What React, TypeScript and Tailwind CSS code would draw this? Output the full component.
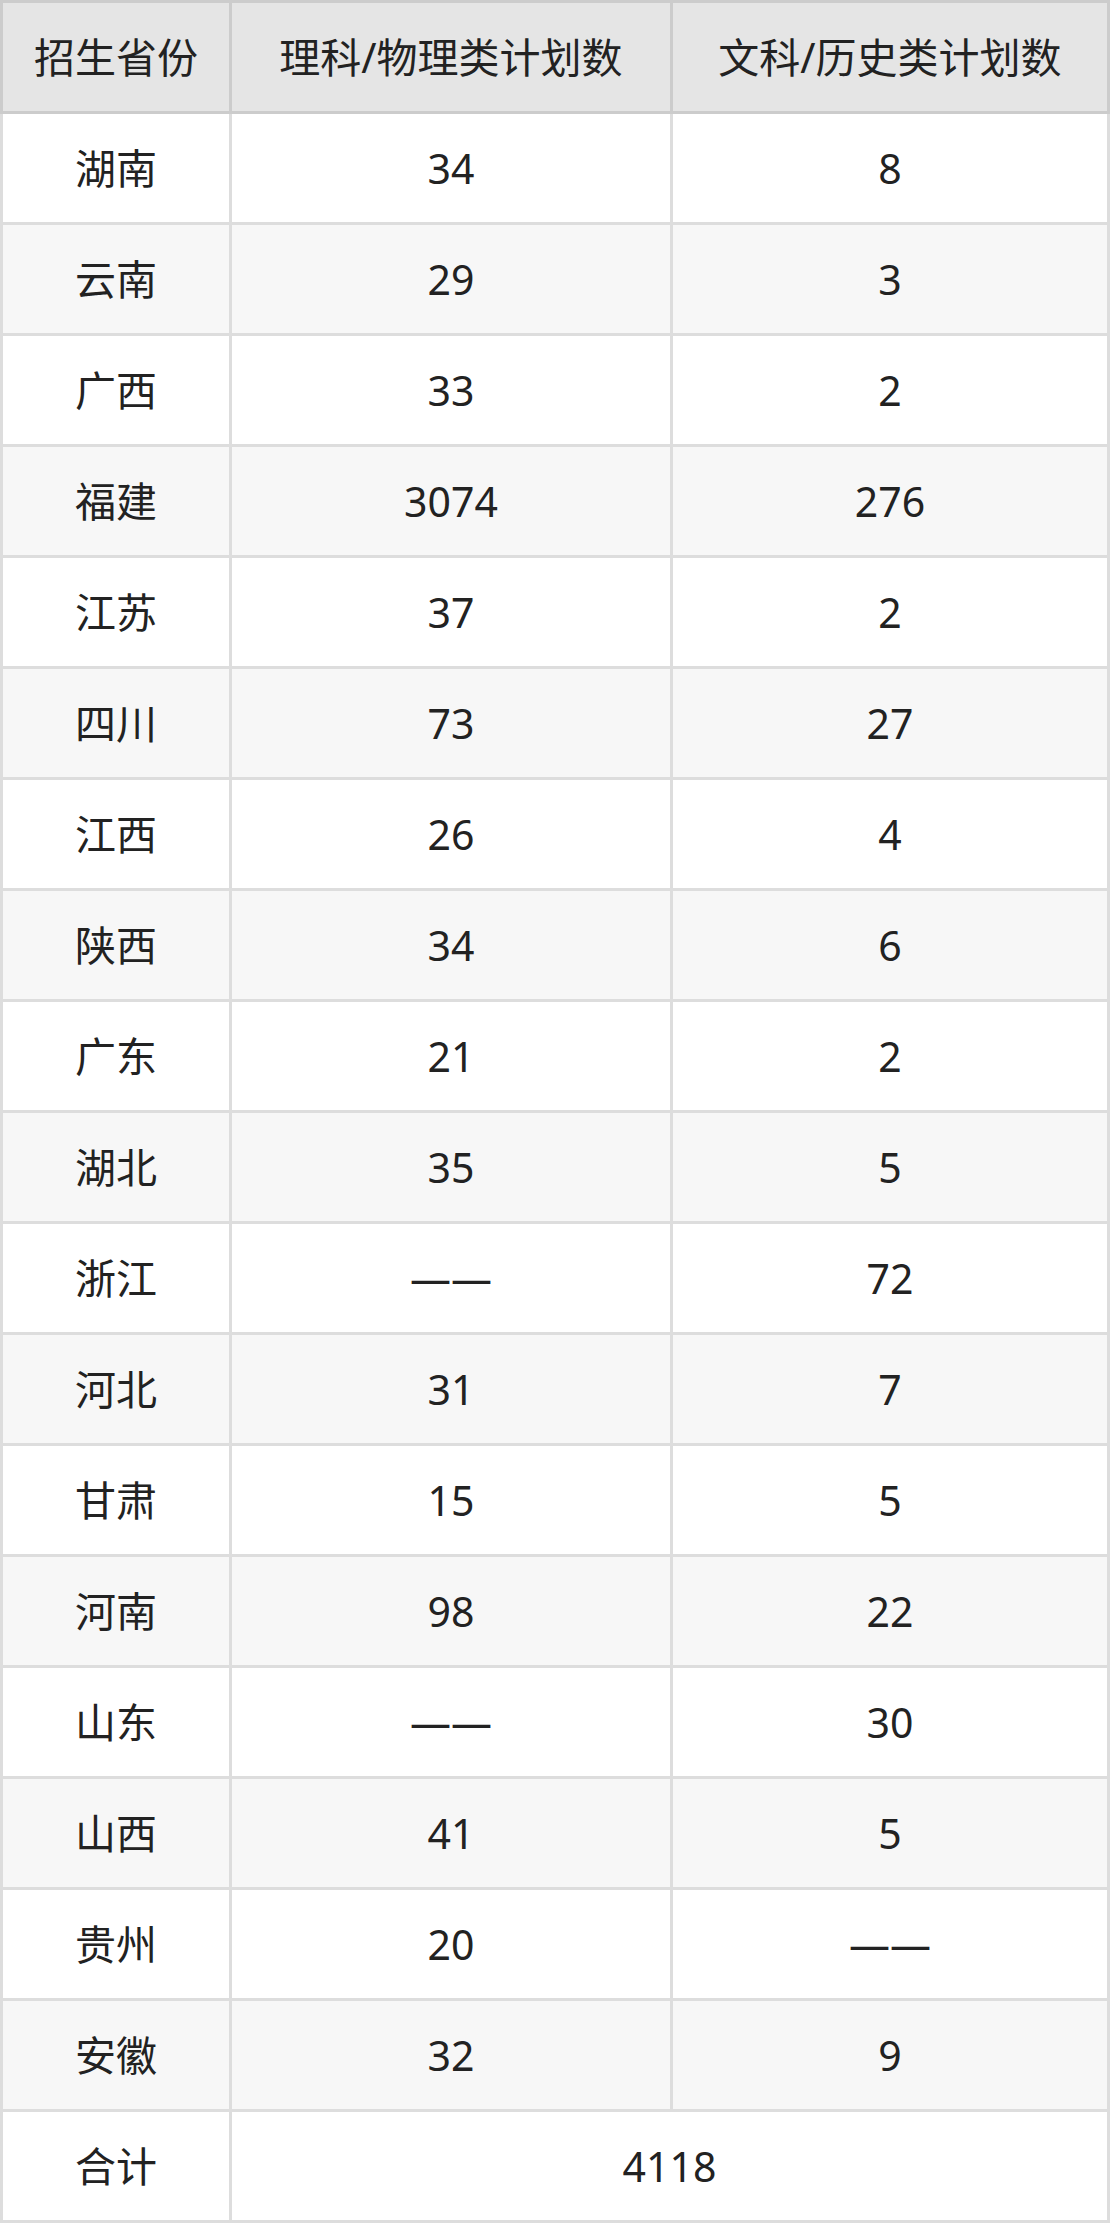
const rows: [string, string, string][] = [
  ["湖南", "34", "8"],
  ["云南", "29", "3"],
  ["广西", "33", "2"],
  ["福建", "3074", "276"],
  ["江苏", "37", "2"],
  ["四川", "73", "27"],
  ["江西", "26", "4"],
  ["陕西", "34", "6"],
  ["广东", "21", "2"],
  ["湖北", "35", "5"],
  ["浙江", "——", "72"],
  ["河北", "31", "7"],
  ["甘肃", "15", "5"],
  ["河南", "98", "22"],
  ["山东", "——", "30"],
  ["山西", "41", "5"],
  ["贵州", "20", "——"],
  ["安徽", "32", "9"],
];

export default function App() {
  const cell = "border-[3px] border-[#dddddd] h-[111px] p-0 text-center align-middle";
  const head = "border-[3px] border-[#cccccc] h-[111px] p-0 text-center align-middle font-normal bg-[#e5e5e5]";
  return (
    <div className="w-[1110px] bg-white text-[#222222] text-[41px] leading-none font-['Noto_Sans','Noto_Sans_CJK_SC',sans-serif]">
      <table className="w-full table-fixed border-collapse">
        <colgroup>
          <col className="w-[229px]" />
          <col className="w-[441px]" />
          <col />
        </colgroup>
        <thead>
          <tr>
            <th className={head}>招生省份</th>
            <th className={head}>理科/物理类计划数</th>
            <th className={head}>文科/历史类计划数</th>
          </tr>
        </thead>
        <tbody>
          {rows.map(([p, a, b], i) => (
            <tr key={p} className={i % 2 === 1 ? "bg-[#f7f7f7]" : "bg-white"}>
              <td className={cell}>{p}</td>
              <td className={cell}>{a}</td>
              <td className={cell}>{b}</td>
            </tr>
          ))}
          <tr className="bg-white">
            <td className={cell}>合计</td>
            <td className={cell} colSpan={2}>4118</td>
          </tr>
        </tbody>
      </table>
    </div>
  );
}
